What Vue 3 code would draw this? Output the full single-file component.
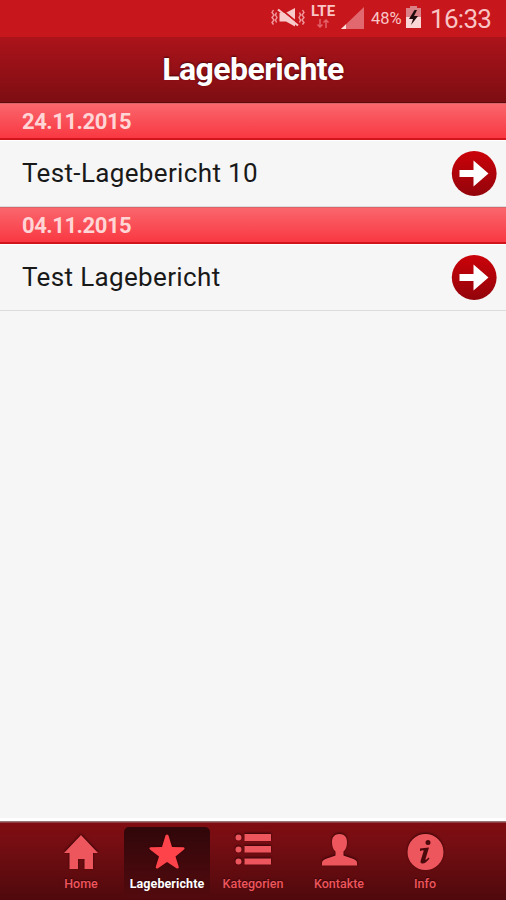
<template>
  <div class="screen">
    <div class="status">
      <svg class="mute" width="34" height="22" viewBox="0 0 34 22">
        <path d="M2.500 3L1 5.500l2 2.500-2 2.500 2 2.500-2 2.500 1.500 2M5.500 5.500L4.500 8 6 10.500 4.500 13l1 2.500M31.500 3L33 5.500 31 8l2 2.500-2 2.500 2 2.500-1.500 2M28.500 5.500l1 2.500-1.500 2.500 1.500 2.500-1 2.500" fill="none" stroke="#f09a9d" stroke-width="1.400" />
        <path d="M8.500 6h6l9.500-5v18.500l-9-5H8.500z" fill="#f9caca" />
        <path d="M8 .5l20 16.500" stroke="#c8161d" stroke-width="1.800" />
        <path d="M7 2.500l20 16" stroke="#f9caca" stroke-width="2.200" />
      </svg>
      <div class="network">
        <span class="lte">LTE</span>
        <svg width="12" height="9" viewBox="0 0 12 9">
          <path d="M3 0v8M0.500 5.500L3 8l2.500-2.500M9 9V1M6.500 3.500L9 1l2.500 2.500" fill="none" stroke="#e4636a" stroke-width="1.500" />
        </svg>
      </div>
      <svg class="signal" width="23" height="22" viewBox="0 0 23 22">
        <path d="M0 22L23 0v22z" fill="#e0686e" />
        <path d="M0 22l5-4.800V22z" fill="#ffe2dc" />
      </svg>
      <span class="percent">48%</span>
      <svg class="battery" width="15" height="22" viewBox="0 0 15 22">
        <path d="M4 0h7v2h4v9H0V2h4z" fill="#d98186" />
        <path d="M0 11h15v11H0z" fill="#fbd6d6" />
        <path d="M8.500 4L3 13h4l-2 6 7-9H8l3-6z" fill="#210b0d" />
      </svg>
      <span class="clock">16:33</span>
    </div>

    <header class="header">
      <h1>Lageberichte</h1>
    </header>

    <main class="list">
      <section v-for="report in reports" :key="report.date">
        <h2 class="date">{{ report.date }}</h2>
        <div class="report">
          <span class="report-title">{{ report.title }}</span>
          <svg width="46" height="46" viewBox="0 0 46 46">
            <defs>
              <linearGradient id="disc" x1="0" y1="0" x2="0" y2="1">
                <stop offset="0" stop-color="#cb0209" />
                <stop offset="1" stop-color="#93040b" />
              </linearGradient>
            </defs>
            <circle cx="23.200" cy="22.500" r="22.400" fill="url(#disc)" />
            <path d="M8.500 19h14V9.500l15 13-15 13V26h-14z" fill="#fff" />
          </svg>
        </div>
      </section>
    </main>

    <nav class="tabs">
      <a v-for="tab in tabs" :key="tab.label" class="tab" :class="{ active: tab.active }">
        <svg class="icon" width="38" height="38" viewBox="0 0 38 38">
          <path :d="tab.path" fill="currentColor" />
          <path v-if="tab.detail" :d="tab.detail" fill="#4b090c" />
        </svg>
        <span class="label">{{ tab.label }}</span>
      </a>
    </nav>
  </div>
</template>

<script setup>
const reports = [
  { date: "24.11.2015", title: "Test-Lagebericht 10" },
  { date: "04.11.2015", title: "Test Lagebericht" },
];

const tabs = [
  {
    label: "Home",
    path: "M19 2L36 20h-5v16h-8.500V26h-6.500v10H7.500V20H2z",
  },
  {
    label: "Lageberichte",
    active: true,
    path: "M17.500 2.500q1.500-2 3 0l3.500 11.500 11.500.3q2 .7.500 2.200L27.500 23.500l3.300 10.500q0 2-2 1.500L19 29l-9.300 6.500q-2 .5-2-1.500L11 23.500 2 16.500q-1.500-1.500.5-2.200L14 14z",
  },
  {
    label: "Kategorien",
    path: "M10.500 1h26.500v7H10.500zM10.500 13h26.500v6.500H10.500zM10.500 25.500h26.500v6H10.500zM1.500 4.500a3 3 0 1 0 6 0a3 3 0 1 0-6 0M1.500 16.500a3 3 0 1 0 6 0a3 3 0 1 0-6 0M1.500 28.500a3 3 0 1 0 6 0a3 3 0 1 0-6 0",
  },
  {
    label: "Kontakte",
    path: "M19.500 1c5 0 7.500 3 7.500 8 0 4-1 7.500-3.500 9.500v4c5 2 13.500 3.500 13.500 7V32.500H2V29.500c0-3.500 8.500-5 13.500-7v-4C13 16.500 12 13 12 9c0-5 2.500-8 7.500-8z",
  },
  {
    label: "Info",
    path: "M1.500 19a18 18 0 1 0 36 0a18 18 0 1 0-36 0",
    detail:
      "M19.500 9.500a2.500 2.500 0 1 0 5 0a2.500 2.500 0 1 0-5 0M14 15.500l9-1-3.500 11.500c-.3 1 .5 1 1.500 0l1.500-1.500 1 1c-2.500 3.500-5.500 5.500-7.500 5-2-.5-1.500-2.500-1-4l2.500-8c.3-1-.2-1.500-1-1.300l-2.500.8z",
  },
];
</script>

<style>
body {
  margin: 0;
}
</style>

<style scoped>
.screen {
  display: flex;
  flex-direction: column;
  height: 900px;
  background: #f6f6f6;
  font-family: Roboto, "Liberation Sans", sans-serif;
}

.status {
  display: flex;
  align-items: flex-start;
  box-sizing: border-box;
  flex: none;
  height: 37px;
  padding: 7px 0 0 271px;
  color: #f9c5c4;
  background: #c8161d;
}

.network {
  display: flex;
  flex-direction: column;
  align-items: center;
  width: 24px;
  margin: -3px 0 0 6px;
}

.lte {
  font-size: 15px;
  line-height: 15px;
  font-weight: 700;
}

.signal {
  margin-left: 6px;
}

.percent {
  width: 31px;
  margin-left: 7px;
  font-size: 16.5px;
  line-height: 24px;
}

.battery {
  margin: -1px 0 0 4px;
}

.clock {
  margin-left: 9px;
  font-size: 26px;
  line-height: 25px;
  letter-spacing: -0.7px;
}

.header {
  display: flex;
  justify-content: center;
  box-sizing: border-box;
  flex: none;
  height: 66px;
  border-bottom: 1px solid #5d0a0c;
  background: linear-gradient(#ac131a, #7d0e13);
}

h1 {
  margin: 0;
  font-size: 32px;
  line-height: 64px;
  font-weight: 700;
  letter-spacing: -0.55px;
  color: #fff;
  text-shadow: 0 -1px 2px #4b0508;
}

.list {
  flex: 1;
}

.date {
  box-sizing: border-box;
  height: 37px;
  margin: 0;
  padding-left: 22px;
  border-top: 1px solid #d9646a;
  border-bottom: 2px solid #d2141c;
  font-size: 22px;
  line-height: 36px;
  font-weight: 700;
  letter-spacing: -0.45px;
  color: #ffd5d5;
  background: linear-gradient(#fa666d, #f93842);
}

.report {
  display: flex;
  align-items: center;
  justify-content: space-between;
  box-sizing: border-box;
  height: 67px;
  padding: 0 9px 0 22px;
  border-top: 1px solid #fff;
  border-bottom: 1px solid #dcdcdc;
}

.report-title {
  margin-top: -2px;
  font-size: 26px;
  color: #191919;
  letter-spacing: 0.35px;
}

.tabs {
  display: flex;
  justify-content: center;
  box-sizing: border-box;
  flex: none;
  height: 82px;
  padding-top: 6px;
  border-top: 3px solid #fff;
  background: linear-gradient(#997577 1px, #7f0c10 2px, #770e13 20px, #4f090c);
}

.tab {
  display: flex;
  flex-direction: column;
  align-items: center;
  width: 86px;
  height: 70px;
  border-radius: 5px;
  color: #ee565e;
}

.active {
  color: #ff434b;
  background: linear-gradient(#30070a, #520a0e);
}

.icon {
  margin-top: 6px;
  filter: drop-shadow(0 -1px 1px #300305);
}

.label {
  margin-top: 4px;
  font-size: 12.5px;
  line-height: 17px;
  font-weight: 500;
  text-shadow: 0 -1px 1px #350407;
}

.active .label {
  font-weight: 700;
  letter-spacing: 0.1px;
  color: #fff;
}
</style>
